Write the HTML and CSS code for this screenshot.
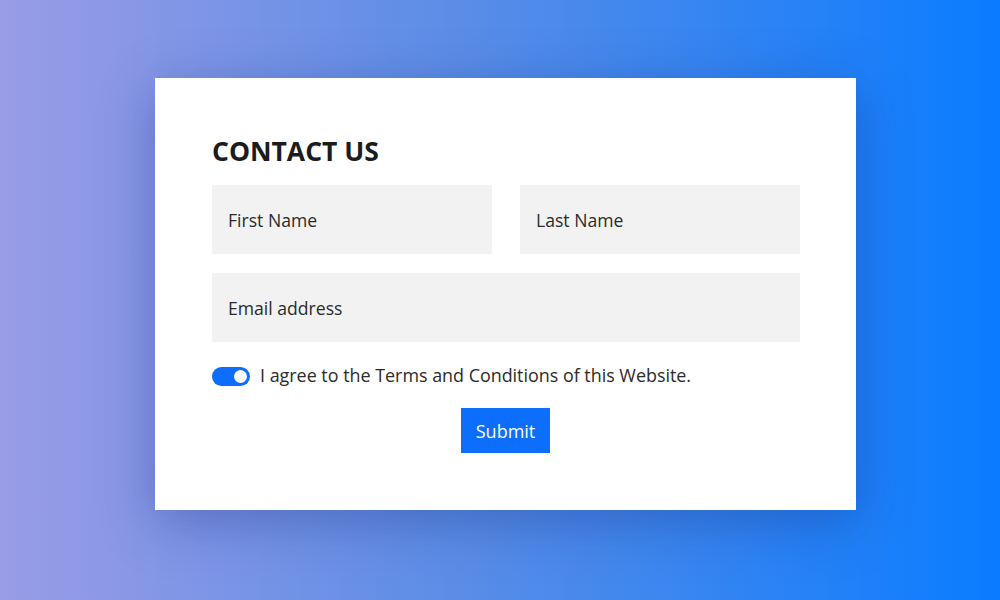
FILE: index.html
```html
<!DOCTYPE html>
<html lang="en">
<head>
<meta charset="utf-8">
<title>Contact Us</title>
<link rel="stylesheet" href="styles.css">
</head>
<body>
<main class="stage">
  <form class="card">
    <h1 class="title">CONTACT US</h1>
    <div class="row two">
      <input class="field" type="text" placeholder="First Name">
      <input class="field" type="text" placeholder="Last Name">
    </div>
    <div class="row">
      <input class="field" type="email" placeholder="Email address">
    </div>
    <label class="agree">
      <span class="toggle"><span class="knob"></span></span>
      <span class="agree-text">I agree to the Terms and Conditions of this Website.</span>
    </label>
    <div class="actions">
      <button class="submit" type="button">Submit</button>
    </div>
  </form>
</main>
</body>
</html>
```
FILE: styles.css
```css
* { box-sizing: border-box; }
html, body { margin: 0; height: 100%; }
body {
  font-family: "Open Sans", "Noto Sans", sans-serif;
  background: linear-gradient(90deg, #9a9ce6 0%, #5c8de6 45%, #0a7cff 100%);
  color: #212529;
}
.stage {
  width: 1000px;
  height: 600px;
  padding: 78px 0 0 155px;
}
.card {
  width: 701px;
  height: 432px;
  background: #fff;
  padding: 57px 56px 57px 57px;
  box-shadow: 0 12px 50px rgba(20, 40, 120, 0.35);
}
.title {
  margin: 1px 0 19px;
  font-size: 26.5px;
  line-height: 30px;
  font-weight: 700;
  color: #1c1c1c;
  letter-spacing: 0;
}
.row { display: flex; margin-bottom: 19px; }
.row.two { gap: 28px; }
.field {
  flex: 1;
  min-width: 0;
  height: 69px;
  border: 0;
  outline: 0;
  background: #f2f2f2;
  padding: 0 16px;
  font-family: inherit;
  font-size: 17.6px;
  color: #212529;
}
.field::placeholder { color: #2b2b2b; opacity: 1; }
.agree {
  display: flex;
  align-items: center;
  gap: 10px;
  height: 20px;
  margin-top: 24px;
  font-size: 17.9px;
  color: #2b2b2b;
}
.agree-text { margin-bottom: 2px; }
.toggle {
  width: 38px;
  height: 19px;
  border-radius: 10px;
  background: #0d6efd;
  display: flex;
  align-items: center;
  justify-content: flex-end;
  padding-right: 3px;
}
.knob {
  width: 13px;
  height: 13px;
  border-radius: 50%;
  background: #fff;
}
.actions {
  display: flex;
  justify-content: center;
  margin-top: 22px;
  padding-right: 1px;
}
.submit {
  width: 89px;
  height: 45px;
  border: 0;
  background: #0d6efd;
  color: #fff;
  font-family: inherit;
  font-size: 18px;
  padding: 0;
}
```
